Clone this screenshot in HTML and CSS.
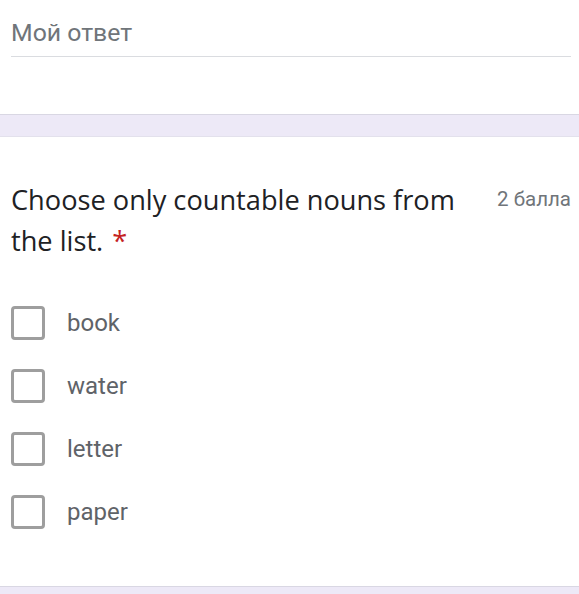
FILE: index.html
```html
<!DOCTYPE html>
<html>
<head>
<meta charset="utf-8">
<link rel="stylesheet" href="styles.css">
</head>
<body>
<div class="card top">
  <div class="answer">Мой ответ</div>
</div>
<div class="band"></div>
<div class="card question">
  <div class="qhead">
    <div class="qtitle">Choose only countable nouns from the list.<span class="req">*</span></div>
    <div class="points">2 балла</div>
  </div>
  <div class="options">
    <label class="opt"><span class="box"></span><span class="lbl">book</span></label>
    <label class="opt"><span class="box"></span><span class="lbl">water</span></label>
    <label class="opt"><span class="box"></span><span class="lbl">letter</span></label>
    <label class="opt"><span class="box"></span><span class="lbl">paper</span></label>
  </div>
</div>
<div class="band"></div>
</body>
</html>
```
FILE: styles.css
```css
html, body {
  margin: 0;
  padding: 0;
  background: #fff;
  font-family: Roboto, "Noto Sans", sans-serif;
}
.card {
  background: #fff;
  padding: 0 8px 0 11px;
}
.top {
  height: 114px;
  box-sizing: border-box;
  padding-top: 18px;
}
.answer {
  font-size: 24.8px;
  color: #70757a;
  line-height: 30px;
  padding-bottom: 8px;
  border-bottom: 1px solid #dadce0;
}
.band {
  height: 21px;
  background: #ede9f7;
  border-top: 1px solid #d9d7e3;
  border-bottom: 1px solid #e3e1ec;
}
.question {
  height: 449px;
  box-sizing: border-box;
  padding-top: 42px;
}
.qhead {
  display: flex;
  justify-content: space-between;
  align-items: flex-start;
}
.qtitle {
  font-family: "Open Sans", Roboto, sans-serif;
  font-size: 27.2px;
  line-height: 41px;
  color: #202124;
  width: 470px;
}
.req {
  color: #c5221f;
  margin-left: 9px;
}
.points {
  font-size: 20.5px;
  color: #70757a;
  line-height: 41px;
  white-space: nowrap;
}
.options {
  margin-top: 45px;
  display: flex;
  flex-direction: column;
  gap: 29px;
}
.opt {
  display: flex;
  align-items: center;
  height: 34px;
}
.box {
  width: 34px;
  height: 34px;
  box-sizing: border-box;
  border: 3px solid #9e9e9e;
  border-radius: 4px;
  flex: none;
}
.lbl {
  margin-left: 22px;
  font-size: 24px;
  color: #5f6368;
  padding-bottom: 0;
}
```
